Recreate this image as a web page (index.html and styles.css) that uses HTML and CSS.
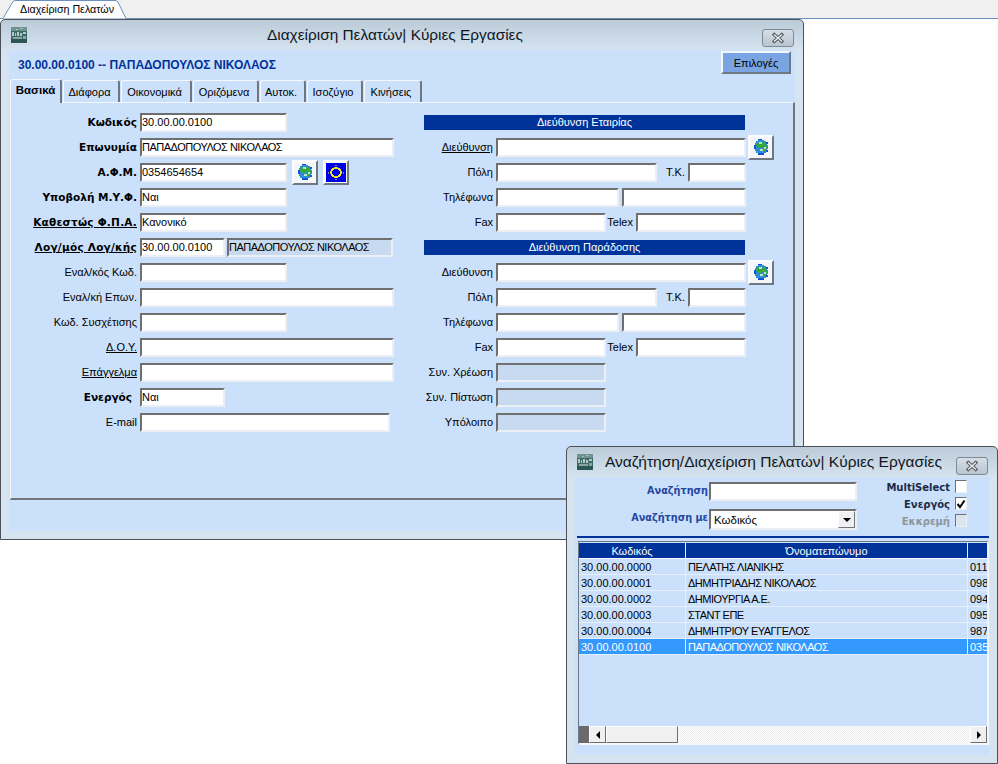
FILE: index.html
```html
<!DOCTYPE html>
<html lang="el">
<head>
<meta charset="utf-8">
<title>Διαχείριση Πελατών</title>
<link rel="stylesheet" href="styles.css">
</head>
<body>
<svg class="defs" width="0" height="0" aria-hidden="true">
  <defs>
    <symbol id="globe" viewBox="0 0 16 16">
      <path d="M5 1h6v1h2v2h1v2h1v4h-1v2h-1v2h-2v1H5v-1H3v-2H2v-2H1V6h1V4h1V2h2z" fill="#2e8fd8"/>
      <path d="M4 3h5v2l2 1-2 3H6L3 7zM10 2l3 2 1 5-3 4-1-3 1-3-2-2z" fill="#35a838"/>
      <path d="M6 3h3v2H6zM11 8h2v2h-2zM7 10h3v2H7z" fill="#bfe3c8"/>
      <path d="M1 6h2v4H1zM13 11h2v2h-2zM5 14h6v2H5zM5 0h4v1H5zM13 3h2v2h-2z" fill="#0a55d8"/>
    </symbol>
    <symbol id="appicon" viewBox="0 0 16 16">
      <rect width="16" height="16" fill="#3b6a68"/>
      <rect width="16" height="4" fill="#6f9490"/>
      <rect y="12" width="16" height="4" fill="#2c5654"/>
      <path d="M1 5h2v4H1zM4 6h1v3H4zM6 5h2v4H6zM9 6h2v3H9zM12 5h3v2h-3z" fill="#b6c9c6"/>
      <path d="M2 10h9v2H2zM12 9h3v3h-3z" fill="#8aa5a2"/>
      <path d="M5 2h2v1H5zM9 1h3v1H9z" fill="#a9bfbc"/>
    </symbol>
    <symbol id="closex" viewBox="0 0 14 12">
      <path d="M2 1.5l10 9M12 1.5l-10 9" stroke="#5a5f66" stroke-width="3.4" fill="none"/>
      <path d="M3 2.5l8 7M11 2.5l-8 7" stroke="#f4f6f8" stroke-width="1.1" fill="none"/>
    </symbol>
  </defs>
</svg>

<header class="topbar">
  <div class="doc-tab">
    <svg class="doc-tab-shape" width="124" height="19" viewBox="0 0 124 19"><path d="M0 18.5 L10 1.5 Q11 .5 13 .5 L112 .5 Q114 .5 115 2 L123 18.5" fill="#fff" stroke="#6d8fc0"/></svg>
    <span class="doc-tab-label">Διαχείριση Πελατών</span>
  </div>
</header>

<section class="win win-main">
  <div class="titlebar">
    <svg class="appicon"><use href="#appicon"/></svg>
    <span class="title">Διαχείριση Πελατών| Κύριες Εργασίες</span>
    <span class="close"><svg width="14" height="12"><use href="#closex"/></svg></span>
  </div>
  <div class="client">
    <div class="head">
      <span class="head-code">30.00.00.0100 -- ΠΑΠΑΔΟΠΟΥΛΟΣ ΝΙΚΟΛΑΟΣ</span>
      <span class="options">Επιλογές</span>
    </div>
    <nav class="tabs">
      <span class="tab active">Βασικά</span>
      <span class="tab w57">Διάφορα</span>
      <span class="tab w71">Οικονομικά</span>
      <span class="tab w66">Οριζόμενα</span>
      <span class="tab w46">Αυτοκ.</span>
      <span class="tab w56">Ισοζύγιο</span>
      <span class="tab w58">Κινήσεις</span>
    </nav>
    <div class="panel">
      <div class="col col-left">
        <div class="row"><span class="lbl strong">Κωδικός</span><span class="fld w147">30.00.00.0100</span></div>
        <div class="row"><span class="lbl strong">Επωνυμία</span><span class="fld w254 caps">ΠΑΠΑΔΟΠΟΥΛΟΣ ΝΙΚΟΛΑΟΣ</span></div>
        <div class="row"><span class="lbl strong">Α.Φ.Μ.</span><span class="fld w147">0354654654</span>
          <span class="iconbtn gap5"><svg width="16" height="16"><use href="#globe"/></svg></span>
          <span class="iconbtn gap5"><svg width="20" height="19" viewBox="0 0 20 19"><rect width="20" height="19" fill="#0000e8"/><path d="M8 4h4v1h2v1h1v2h1v3h-1v2h-1v1h-2v1H8v-1H6v-1H5v-2H4V8h1V6h1V5h2zM8 6v1H7v1H6v3h1v1h1v1h4v-1h1v-1h1V8h-1V7h-1V6z" fill="#e8e020"/><path d="M9 2h2v1H9zM2 9h1v2H2zM17 9h1v2h-1zM9 16h2v1H9z" fill="#7f7fc0"/></svg></span>
        </div>
        <div class="row"><span class="lbl strong">Υποβολή Μ.Υ.Φ.</span><span class="fld w147">Ναι</span></div>
        <div class="row"><span class="lbl strong link">Καθεστώς Φ.Π.Α.</span><span class="fld w147">Κανονικό</span></div>
        <div class="row"><span class="lbl strong link">Λογ/μός Λογ/κής</span><span class="fld w85">30.00.00.0100</span><span class="fld ro w166 gap2 caps">ΠΑΠΑΔΟΠΟΥΛΟΣ ΝΙΚΟΛΑΟΣ</span></div>
        <div class="row"><span class="lbl">Εναλ/κός Κωδ.</span><span class="fld w147"></span></div>
        <div class="row"><span class="lbl">Εναλ/κή Επων.</span><span class="fld w254"></span></div>
        <div class="row"><span class="lbl">Κωδ. Συσχέτισης</span><span class="fld w147"></span></div>
        <div class="row"><span class="lbl link">Δ.Ο.Υ.</span><span class="fld w254"></span></div>
        <div class="row"><span class="lbl link">Επάγγελμα</span><span class="fld w254"></span></div>
        <div class="row"><span class="lbl strong inset">Ενεργός</span><span class="fld w85">Ναι</span></div>
        <div class="row"><span class="lbl">E-mail</span><span class="fld w250"></span></div>
      </div>
      <div class="col col-right">
        <div class="row"><span class="band">Διεύθυνση Εταιρίας</span></div>
        <div class="row"><span class="lbl link">Διεύθυνση</span><span class="fld w250"></span><span class="iconbtn gap2"><svg width="16" height="16"><use href="#globe"/></svg></span></div>
        <div class="row"><span class="lbl">Πόλη</span><span class="fld w161"></span><span class="lbl-mid wtk">Τ.Κ.</span><span class="fld w58"></span></div>
        <div class="row"><span class="lbl">Τηλέφωνα</span><span class="fld w123"></span><span class="fld w124 gap3"></span></div>
        <div class="row"><span class="lbl">Fax</span><span class="fld w110"></span><span class="lbl-mid wtx">Telex</span><span class="fld w110"></span></div>
        <div class="row"><span class="band">Διεύθυνση Παράδοσης</span></div>
        <div class="row"><span class="lbl">Διεύθυνση</span><span class="fld w250"></span><span class="iconbtn gap2"><svg width="16" height="16"><use href="#globe"/></svg></span></div>
        <div class="row"><span class="lbl">Πόλη</span><span class="fld w161"></span><span class="lbl-mid wtk">Τ.Κ.</span><span class="fld w58"></span></div>
        <div class="row"><span class="lbl">Τηλέφωνα</span><span class="fld w123"></span><span class="fld w124 gap3"></span></div>
        <div class="row"><span class="lbl">Fax</span><span class="fld w110"></span><span class="lbl-mid wtx">Telex</span><span class="fld w110"></span></div>
        <div class="row"><span class="lbl">Συν. Χρέωση</span><span class="fld ro w110"></span></div>
        <div class="row"><span class="lbl">Συν. Πίστωση</span><span class="fld ro w110"></span></div>
        <div class="row"><span class="lbl">Υπόλοιπο</span><span class="fld ro w110"></span></div>
      </div>
    </div>
  </div>
</section>

<section class="win win-search">
  <div class="titlebar">
    <svg class="appicon"><use href="#appicon"/></svg>
    <span class="title">Αναζήτηση/Διαχείριση Πελατών| Κύριες Εργασίες</span>
    <span class="close"><svg width="14" height="12"><use href="#closex"/></svg></span>
  </div>
  <div class="client">
    <div class="filters">
      <div class="filter-main">
        <div class="frow"><span class="flbl">Αναζήτηση</span><span class="fld w148"></span></div>
        <div class="frow"><span class="flbl">Αναζήτηση με</span>
          <span class="fld combo w148"><span class="combo-text">Κωδικός</span><span class="combo-btn"></span></span>
        </div>
      </div>
      <div class="checks">
        <div class="crow"><span>MultiSelect</span><span class="box"></span></div>
        <div class="crow"><span>Ενεργός</span><span class="box"><svg width="10" height="10" viewBox="0 0 10 10"><path d="M1.5 5l2.5 3L8.5 1.5" fill="none" stroke="#000" stroke-width="2"/></svg></span></div>
        <div class="crow off"><span>Εκκρεμή</span><span class="box"></span></div>
      </div>
    </div>
    <div class="rule"></div>
    <div class="grid">
      <div class="grow ghead"><span>Κωδικός</span><span>Όνοματεπώνυμο</span><span></span></div>
      <div class="grow"><span>30.00.00.0000</span><span class="caps">ΠΕΛΑΤΗΣ ΛΙΑΝΙΚΗΣ</span><span>011</span></div>
      <div class="grow"><span>30.00.00.0001</span><span class="caps">ΔΗΜΗΤΡΙΑΔΗΣ ΝΙΚΟΛΑΟΣ</span><span>098</span></div>
      <div class="grow"><span>30.00.00.0002</span><span class="caps">ΔΗΜΙΟΥΡΓΙΑ Α.Ε.</span><span>094</span></div>
      <div class="grow"><span>30.00.00.0003</span><span class="caps">ΣΤΑΝΤ ΕΠΕ</span><span>095</span></div>
      <div class="grow"><span>30.00.00.0004</span><span class="caps">ΔΗΜΗΤΡΙΟΥ ΕΥΑΓΓΕΛΟΣ</span><span>987</span></div>
      <div class="grow sel"><span>30.00.00.0100</span><span class="caps">ΠΑΠΑΔΟΠΟΥΛΟΣ ΝΙΚΟΛΑΟΣ</span><span>035</span></div>
      <div class="hscroll">
        <span class="corner"></span>
        <span class="sbtn"><i class="arrow left"></i></span>
        <span class="thumb"></span>
        <span class="track"></span>
        <span class="sbtn"><i class="arrow right"></i></span>
      </div>
    </div>
  </div>
</section>
</body>
</html>
```
FILE: styles.css
```css
* { box-sizing: border-box; }
html, body { margin: 0; padding: 0; }
body {
  width: 998px;
  height: 764px;
  overflow: hidden;
  position: relative;
  background: #fff;
  color: #000;
  font: 11px/14px "Liberation Sans", "Noto Sans", sans-serif;
}
.defs { position: absolute; }
.caps { letter-spacing: -.5px; }

/* document tab strip */
.topbar {
  height: 19px;
  background: #f0f0f0;
  border-bottom: 1px solid #6d8fc0;
  padding-left: 3px;
}
.doc-tab { position: relative; width: 124px; height: 19px; }
.doc-tab-shape { position: absolute; left: 0; top: 0; }
.doc-tab-label {
  position: absolute;
  left: 17px;
  top: 2px;
  white-space: nowrap;
  font-size: 10.7px;
}

/* windows on the desktop */
.win {
  position: absolute;
  display: flex;
  flex-direction: column;
  padding: 0 8px 8px;
  border: 1px solid #4d5157;
  border-radius: 5px 5px 0 0;
  background: linear-gradient(#bccbd8 0, #d6e4f1 31px);
}
.win-main { left: 0; top: 19px; width: 804px; height: 521px; }
.win-search { left: 566px; top: 446px; width: 432px; height: 318px; }

.titlebar {
  height: 30px;
  flex: none;
  display: flex;
  align-items: center;
  position: relative;
}
.appicon { width: 16px; height: 16px; flex: none; margin-left: 2px; }
.title {
  font-size: 15.4px;
  white-space: nowrap;
  color: #10161f;
}
.win-main .title { margin-left: 240px; }
.win-search .title { margin-left: 12px; font-size: 15.5px; }
.close {
  position: absolute;
  top: 9px;
  right: 1px;
  width: 32px;
  height: 18px;
  display: flex;
  align-items: center;
  justify-content: center;
  border: 1px solid #7f8a96;
  border-radius: 3px;
  background: linear-gradient(#d6dee6, #b9c5d1);
}
.win-search .close { top: 10px; right: 1px; }

.client {
  flex: 1;
  min-height: 0;
  display: flex;
  flex-direction: column;
  background: #cbe0fb;
}

/* main window header */
.head {
  height: 29px;
  flex: none;
  display: flex;
  align-items: flex-start;
  justify-content: space-between;
  padding: 1px 4px 0 9px;
}
.head-code {
  margin-top: 7px;
  font-weight: 700;
  font-size: 12px;
  color: #003399;
}
.options {
  width: 70px;
  height: 23px;
  display: flex;
  align-items: center;
  justify-content: center;
  background: #7ba4e2;
  border: 2px solid;
  border-color: #f4f8fd #6f7780 #6f7780 #f4f8fd;
}

/* tabs */
.tabs {
  height: 23px;
  flex: none;
  display: flex;
  align-items: flex-end;
  gap: 1px;
  padding-left: 1px;
}
.tab {
  height: 22px;
  display: flex;
  align-items: center;
  justify-content: center;
  padding-right: 3px;
  border-left: 1px solid #f4f8fd;
  border-top: 1px solid #f4f8fd;
  border-right: 2px solid #70767c;
  border-radius: 3px 3px 0 0;
  white-space: nowrap;
}
.tab.active {
  width: 52px;
  height: 24px;
  font-weight: 700;
  font-size: 11.5px;
  padding: 0 0 3px;
  position: relative;
  z-index: 1;
  margin-bottom: -1px;
  background: #cbe0fb;
}
.w57 { width: 57px; }
.w71 { width: 71px; }
.w66 { width: 66px; }
.w46 { width: 46px; }
.w56 { width: 56px; }
.w58 { width: 58px; }

/* tab page */
.panel {
  height: 398px;
  flex: none;
  margin-left: 1px;
  display: flex;
  padding-top: 10px;
  border-top: 1px solid #f4f8fd;
  border-left: 1px solid #f4f8fd;
  border-right: 2px solid #70767c;
  border-bottom: 2px solid #70767c;
}
.col { display: flex; flex-direction: column; gap: 7px; }
.col-left { width: 413px; --lw: 129px; }
.col-right { --lw: 72px; }
.row { height: 18px; display: flex; align-items: center; }
.lbl {
  width: var(--lw);
  flex: none;
  text-align: right;
  padding-right: 3px;
  white-space: nowrap;
}
.strong {
  font-family: "DejaVu Sans", sans-serif;
  font-weight: 700;
  font-size: 10.5px;
}
.strong.link { letter-spacing: .25px; }
.inset { padding-right: 8px; }
.link { text-decoration: underline; }
.lbl-mid { flex: none; text-align: right; padding-right: 3px; }
.wtk { width: 31px; }
.wtx { width: 30px; }

.fld {
  height: 19px;
  flex: none;
  display: block;
  overflow: hidden;
  white-space: nowrap;
  line-height: 15px;
  background: #fff;
  border: 2px solid;
  border-color: #6f6f6f #eceff3 #eceff3 #6f6f6f;
}
.fld.ro { background: #c8daf0; }
.w85 { width: 85px; }
.w110 { width: 110px; }
.w123 { width: 123px; }
.w124 { width: 124px; }
.w147 { width: 147px; }
.w148 { width: 148px; }
.w161 { width: 161px; }
.w166 { width: 166px; }
.w250 { width: 250px; }
.w254 { width: 254px; }
.w58.fld { width: 58px; }
.gap2 { margin-left: 2px; }
.gap3 { margin-left: 3px; }
.gap5 { margin-left: 5px; }

.iconbtn {
  width: 26px;
  height: 25px;
  flex: none;
  display: flex;
  align-items: center;
  justify-content: center;
  background: #f4f6f9;
  border: 2px solid;
  border-color: #fafcff #6f7780 #6f7780 #fafcff;
}
.band {
  width: 321px;
  height: 15px;
  line-height: 15px;
  text-align: center;
  color: #fff;
  background: #003399;
}

/* search window */
.filters {
  height: 59px;
  flex: none;
  display: flex;
  justify-content: space-between;
  padding-top: 5px;
}
.filter-main { display: flex; flex-direction: column; gap: 7px; }
.frow { height: 20px; display: flex; align-items: flex-start; }
.flbl {
  width: 134px;
  text-align: right;
  padding: 2px 1px 0 0;
  font-family: "DejaVu Sans", sans-serif;
  font-weight: 700;
  font-size: 9.7px;
  color: #23479f;
}
.combo {
  height: 21px;
  display: flex;
  justify-content: space-between;
  padding: 0;
}
.combo-text { line-height: 18px; padding-left: 3px; font-size: 11.5px; }
.combo-btn {
  width: 17px;
  height: 17px;
  position: relative;
  background: #eef0f2;
  border: 1px solid;
  border-color: #fff #6f7780 #6f7780 #fff;
}
.combo-btn::after {
  content: "";
  position: absolute;
  left: 4px;
  top: 6px;
  border: 4px solid transparent;
  border-top: 4px solid #000;
  border-bottom: 0;
}
.checks {
  display: flex;
  flex-direction: column;
  gap: 4px;
  padding: 0 22px 0 0;
  margin-top: -2px;
}
.crow {
  height: 13px;
  display: flex;
  justify-content: flex-end;
  align-items: flex-end;
  gap: 5px;
  font-family: "DejaVu Sans", sans-serif;
  font-weight: 700;
  font-size: 10px;
  color: #1c2a44;
}
.crow > span:first-child { margin-bottom: -2px; }
.crow.off { color: #8f959c; }
.box {
  width: 12px;
  height: 13px;
  display: flex;
  align-items: center;
  justify-content: center;
  background: #fff;
  border: 1px solid;
  border-color: #6f6f6f #eceff3 #eceff3 #6f6f6f;
}
.crow.off .box { background: #dce4ee; }
.rule {
  height: 2px;
  flex: none;
  margin: 0 0 0 2px;
  background: #003399;
}
.grid {
  height: 204px;
  flex: none;
  width: 411px;
  margin: 3px 0 0 3px;
  display: flex;
  flex-direction: column;
  padding-top: 1px;
  border: 2px solid;
  border-color: #6f7780 #f4f8fd #f4f8fd #6f7780;
  border-top-width: 1px;
  border-left-width: 1px;
}
.grow {
  height: 16px;
  flex: none;
  display: grid;
  grid-template-columns: 107px 282px 20px;
  border-bottom: 1px solid #e6effb;
  line-height: 16px;
}
.grow span {
  padding-left: 2px;
  border-right: 1px solid #e6effb;
  overflow: hidden;
  white-space: nowrap;
}
.ghead { background: #003399; color: #fff; border-bottom-color: #fff; }
.ghead span { text-align: center; padding: 0; }
.sel { background: #3399ff; color: #fff; }
.hscroll {
  margin-top: auto;
  height: 17px;
  flex: none;
  display: flex;
}
.corner { width: 10px; background: #6a6a6a; }
.sbtn {
  width: 17px;
  display: flex;
  align-items: center;
  justify-content: center;
  background: #f0f0f0;
  border: 1px solid;
  border-color: #fff #6f6f6f #6f6f6f #fff;
}
.thumb {
  width: 72px;
  background: #f0f0f0;
  border: 1px solid;
  border-color: #fff #6f6f6f #6f6f6f #fff;
}
.track {
  flex: 1;
  background: repeating-conic-gradient(#fff 0 25%, #ececec 0 50%) 0 0 / 2px 2px;
}
.arrow { display: block; width: 0; height: 0; border: 4px solid transparent; }
.arrow.left { border-right-color: #000; border-left: 0; }
.arrow.right { border-left-color: #000; border-right: 0; }
```
